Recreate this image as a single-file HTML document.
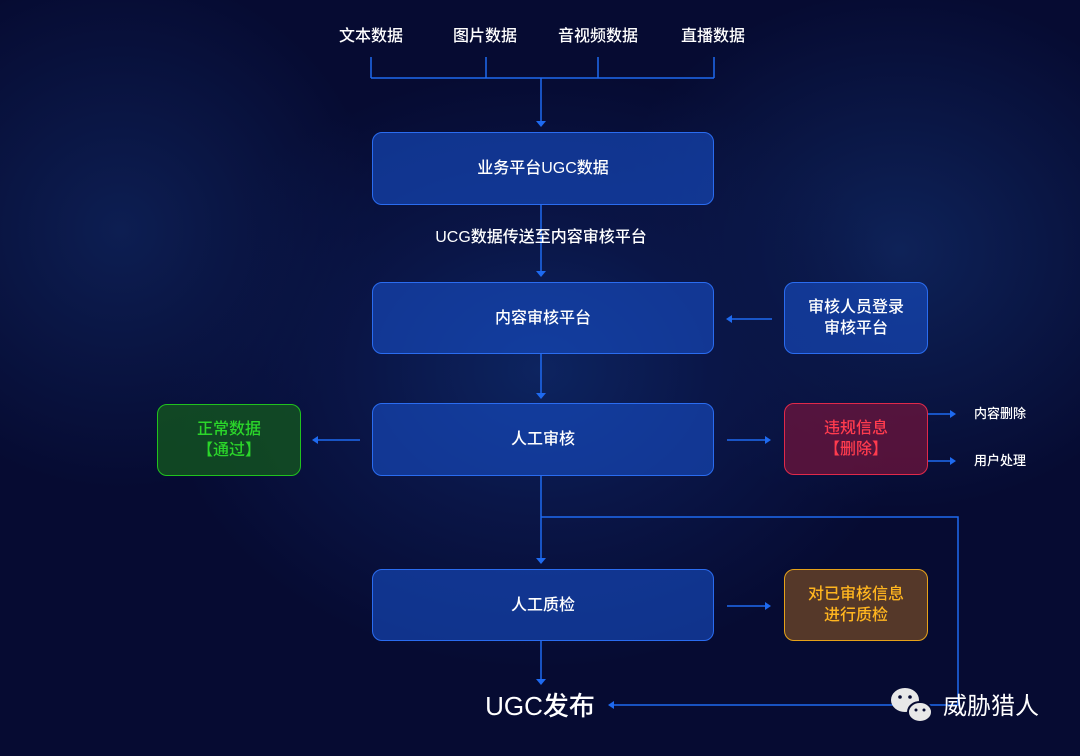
<!DOCTYPE html>
<html><head><meta charset="utf-8"><style>
*{margin:0;padding:0;box-sizing:border-box}
body{width:1080px;height:756px;overflow:hidden;position:relative;
background:radial-gradient(ellipse 380px 300px at 540px 370px,#0d2460 0%,#0a1648 45%,rgba(6,12,50,0) 100%),
radial-gradient(ellipse 300px 260px at 900px 250px,#0e2258 0%,rgba(6,12,50,0) 100%),
radial-gradient(ellipse 260px 260px at 120px 230px,#0d1e52 0%,rgba(6,12,50,0) 100%),#060b32;
font-family:"Liberation Sans","Noto Sans CJK SC",sans-serif;color:#fff}
.t{position:absolute;font-size:16px;font-weight:500;text-align:center;line-height:20px}
.b{position:absolute;border:1.5px solid #2a6cf0;border-radius:10px;background:rgba(24,78,200,.6);display:flex;align-items:center;justify-content:center;text-align:center;font-size:16px;font-weight:500;line-height:21px}
svg{position:absolute;left:0;top:0}
</style></head><body>
<svg width="1080" height="756">
<g stroke="#1e6af0" stroke-width="1.5" fill="none">
<path d="M371 57V78M486 57V78M598 57V78M714 57V78M371 78H714M541 78V122"/>
<path d="M541 205V272M541 354V394M541 476V560M541 517H958V705H614M541 641V680"/>
<path d="M772 319H732M360 440H318M727 440H765M727 606H765M928 414H950M928 461H950"/>
</g>
<g fill="#1e6af0">
<path d="M536 121h10l-5 6z"/><path d="M536 271h10l-5 6z"/><path d="M536 393h10l-5 6z"/><path d="M536 558h10l-5 6z"/><path d="M536 679h10l-5 6z"/>
<path d="M732 315v8l-6-4z"/><path d="M318 436v8l-6-4z"/><path d="M765 436v8l6-4z"/><path d="M765 602v8l6-4z"/>
<path d="M950 410v8l6-4z"/><path d="M950 457v8l6-4z"/><path d="M614 701v8l-6-4z"/>
</g>
<g fill="#e8e8e8"><ellipse cx="905" cy="700" rx="14" ry="12"/><ellipse cx="920" cy="712" rx="12" ry="10" stroke="#060b32" stroke-width="2"/></g>
<g fill="#060b32"><circle cx="900" cy="697" r="1.8"/><circle cx="910" cy="697" r="1.8"/><circle cx="916" cy="710" r="1.5"/><circle cx="924" cy="710" r="1.5"/></g>
</svg>
<div class="t" style="left:321px;top:27px;width:100px">文本数据</div>
<div class="t" style="left:435px;top:27px;width:100px">图片数据</div>
<div class="t" style="left:548px;top:27px;width:100px">音视频数据</div>
<div class="t" style="left:663px;top:27px;width:100px">直播数据</div>
<div class="b" style="left:372px;top:132px;width:342px;height:73px">业务平台UGC数据</div>
<div class="t" style="left:391px;top:228px;width:300px">UCG数据传送至内容审核平台</div>
<div class="b" style="left:372px;top:282px;width:342px;height:72px">内容审核平台</div>
<div class="b" style="left:784px;top:282px;width:144px;height:72px">审核人员登录<br>审核平台</div>
<div class="b" style="left:372px;top:403px;width:342px;height:73px">人工审核</div>
<div class="b" style="left:157px;top:404px;width:144px;height:72px;border-color:#21c21e;background:rgba(20,90,30,.75);color:#2bd62a">正常数据<br>【通过】</div>
<div class="b" style="left:784px;top:403px;width:144px;height:72px;border-color:#e0294a;background:rgba(110,20,60,.75);color:#ff3b4e">违规信息<br>【删除】</div>
<div class="t" style="left:962px;top:404px;width:76px;font-size:13px">内容删除</div>
<div class="t" style="left:962px;top:451px;width:76px;font-size:13px">用户处理</div>
<div class="b" style="left:372px;top:569px;width:342px;height:72px">人工质检</div>
<div class="b" style="left:784px;top:569px;width:144px;height:72px;border-color:#e6a219;background:rgba(100,65,40,.85);color:#ffb51f">对已审核信息<br>进行质检</div>
<div class="t" style="left:470px;top:690px;width:140px;font-size:26px;line-height:32px">UGC发布</div>
<div class="t" style="left:936px;top:692px;width:110px;font-size:24px;line-height:30px;font-weight:normal">威胁猎人</div>
</body></html>
